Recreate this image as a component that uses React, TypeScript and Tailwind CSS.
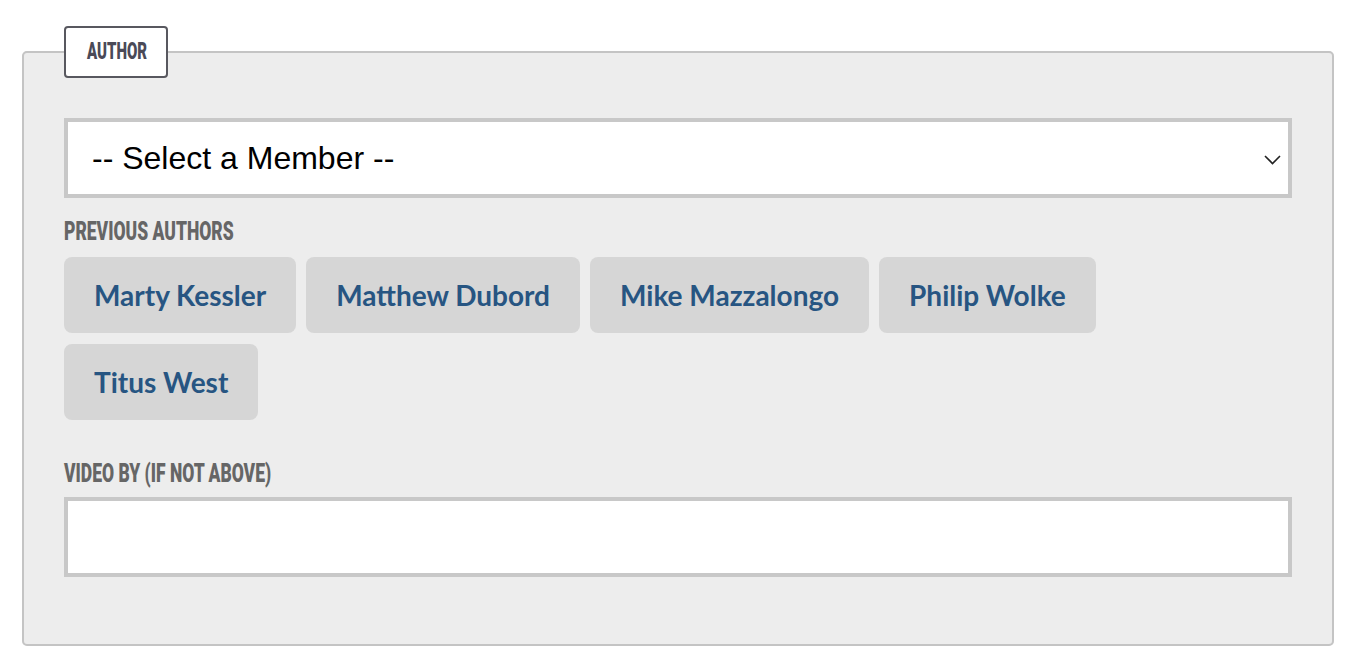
import React from 'react';

const authors = ['Marty Kessler', 'Matthew Dubord', 'Mike Mazzalongo', 'Philip Wolke', 'Titus West'];

// no condensed face installed, so squeeze Roboto black horizontally
const condensed = "font-['Roboto',sans-serif] font-black uppercase";

function Label({ text, className }: { text: string; className?: string }) {
  return (
    <div className={`${condensed} text-[25px] leading-[24px] text-[#666] ${className ?? ''}`}>
      <span className="inline-block origin-left scale-x-[0.7] whitespace-nowrap">{text}</span>
    </div>
  );
}

export default function App() {
  return (
    <div className="min-h-screen bg-white pl-[22px] pr-[30px] pt-[26px] pb-[18px]">
      <fieldset className="rounded-[5px] border-2 border-[#c4c4c4] bg-[#ededed] px-[40px] pt-[40px] pb-[67px]">
        <legend className="w-[104px] rounded-[4px] border-2 border-[#58585f] bg-white py-[12px] pl-[21px]">
          <span className={`${condensed} block text-[23px] leading-[24px] text-[#4a4a57]`}>
            <span className="inline-block origin-left scale-x-[0.65]">Author</span>
          </span>
        </legend>

        <div className="relative">
          <select className="h-[80px] w-full appearance-none border-4 border-[#c8c8c8] bg-white pl-[24px] font-['Liberation_Sans',Arial,sans-serif] text-[32px] text-black outline-none">
            <option>-- Select a Member --</option>
          </select>
          <svg
            className="pointer-events-none absolute right-[11px] top-[37px]"
            width="17"
            height="10"
            viewBox="0 0 17 10"
            fill="none"
          >
            <path d="M1 1l7.5 7.5L16 1" stroke="#222" strokeWidth="1.6" />
          </svg>
        </div>

        <Label text="Previous Authors" className="mt-[22px]" />

        <div className="mt-[13px] flex flex-wrap gap-x-[10px] gap-y-[11px]">
          {authors.map((name) => (
            <button
              key={name}
              className="h-[76px] rounded-[8px] bg-[#d6d6d6] px-[30px] font-['Lato',sans-serif] text-[28px] font-bold text-[#275582]"
            >
              {name}
            </button>
          ))}
        </div>

        <Label text="Video By (If Not Above)" className="mt-[42px]" />

        <input
          type="text"
          className="mt-[11px] block h-[80px] w-full border-4 border-[#c8c8c8] bg-white outline-none"
        />
      </fieldset>
    </div>
  );
}
